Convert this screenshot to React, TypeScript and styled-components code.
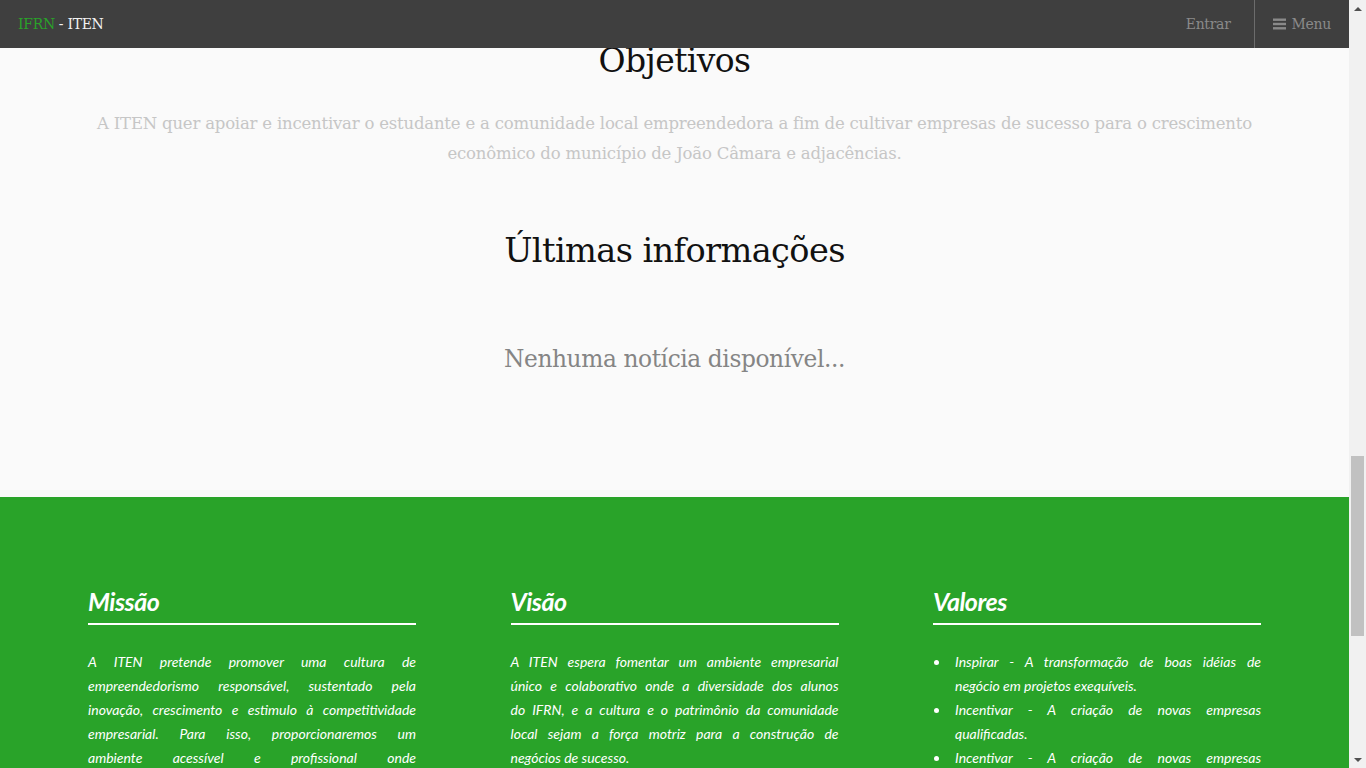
import React from "react";
import styled, { createGlobalStyle } from "styled-components";

const Global = createGlobalStyle`
  html, body { overflow: hidden; }
  body {
    margin: 0;
    background: #fafafa;
    font-family: "DejaVu Serif", "Liberation Serif", serif;
  }
`;

const Frame = styled.div`
  display: flex;
  height: 100vh;
  overflow: hidden;
`;

const Viewport = styled.div`
  flex: 1;
  position: relative;
  overflow: hidden;
`;

const ScrollTrack = styled.div`
  width: 17px;
  flex: none;
  background: #f1f1f1;
  display: flex;
  flex-direction: column;
  align-items: center;
`;

const Arrow = styled.div<{ $down?: boolean }>`
  height: 17px;
  width: 17px;
  display: flex;
  align-items: center;
  justify-content: center;
  margin-top: ${(p) => (p.$down ? "auto" : "0")};
  &::after {
    content: "";
    width: 0;
    height: 0;
    border-left: 4px solid transparent;
    border-right: 4px solid transparent;
    ${(p) =>
      p.$down ? "border-top: 4px solid #505050;" : "border-bottom: 4px solid #505050;"}
  }
`;

const Thumb = styled.div<{ $offset: number; $size: number }>`
  width: 13px;
  margin-top: ${(p) => p.$offset}px;
  height: ${(p) => p.$size}px;
  background: #c1c1c1;
`;

const NavBar = styled.header`
  position: absolute;
  top: 0;
  left: 0;
  right: 0;
  height: 48px;
  background: #3f3f3f;
  display: flex;
  align-items: stretch;
  justify-content: space-between;
  z-index: 10;
`;

const Brand = styled.a`
  display: flex;
  align-items: center;
  padding-left: 18px;
  font-family: "DejaVu Serif", serif;
  font-size: 14px;
  color: #f2f2f2;
  text-decoration: none;
  letter-spacing: -0.3px;
`;

const BrandAccent = styled.span`
  color: #2aa12a;
  margin-right: 4px;
`;

const NavRight = styled.nav`
  display: flex;
  align-items: stretch;
`;

const NavLink = styled.a<{ $divider?: boolean }>`
  display: flex;
  align-items: center;
  gap: 6px;
  padding: 0 ${(p) => (p.$divider ? "18px" : "23px")};
  font-family: "DejaVu Serif", serif;
  font-size: 14px;
  color: #8a8a8a;
  text-decoration: none;
  letter-spacing: -0.3px;
  border-left: ${(p) => (p.$divider ? "1px solid #6c6c6c" : "none")};
`;

const Main = styled.main`
  padding-top: 41px;
`;

const Section = styled.section`
  max-width: 1170px;
  margin: 0 auto;
  text-align: center;
`;

const Title = styled.h2<{ $top?: number; $size?: number }>`
  margin: ${(p) => p.$top ?? 0}px 0 0;
  font-family: "DejaVu Serif", serif;
  font-weight: 400;
  font-size: ${(p) => p.$size ?? 33}px;
  line-height: 40px;
  color: #111;
  letter-spacing: -0.6px;
`;

const Lead = styled.p`
  margin: 28px 0 0;
  font-family: "DejaVu Serif", serif;
  font-size: 16.5px;
  line-height: 30px;
  color: #c6c6c6;
  letter-spacing: -0.2px;
`;

const Empty = styled.p`
  margin: 73px 0 0;
  padding-bottom: 123px;
  font-family: "DejaVu Serif", serif;
  font-size: 23.3px;
  line-height: 30px;
  color: #858585;
  letter-spacing: -0.4px;
`;

const Green = styled.section`
  background: #29a329;
  padding: 87px 0 80px;
  color: #ffffff;
`;

const Columns = styled.div`
  width: 1173px;
  margin: 0 auto;
  display: grid;
  grid-template-columns: repeat(3, 328px);
  column-gap: 94.5px;
`;

const Column = styled.div``;

const ColTitle = styled.h3`
  margin: 0;
  padding-bottom: 5px;
  border-bottom: 2px solid #ffffff;
  font-family: "Lato", sans-serif;
  font-style: italic;
  font-weight: 700;
  font-size: 25px;
  line-height: 34px;
  letter-spacing: -0.5px;
`;

const textBase = `
  font-family: "Lato", sans-serif;
  font-style: italic;
  font-size: 14px;
  line-height: 24px;
  color: #ffffff;
`;

const ColText = styled.p`
  margin: 25px 0 0;
  ${textBase}
`;

const Line = styled.span<{ $last?: boolean }>`
  display: block;
  white-space: nowrap;
  text-align: justify;
  text-align-last: ${(p) => (p.$last ? "left" : "justify")};
`;

const List = styled.ul`
  margin: 25px 0 0;
  padding-left: 22px;
  list-style: none;
  ${textBase}
`;

const Item = styled.li`
  position: relative;
  &::before {
    content: "";
    position: absolute;
    left: -21px;
    top: 10px;
    width: 5px;
    height: 5px;
    border-radius: 50%;
    background: #ffffff;
  }
`;

const BarsIcon = () => (
  <svg width="13" height="12" viewBox="0 0 13 12" aria-hidden="true">
    <rect x="0" y="0.5" width="13" height="2.4" fill="#8a8a8a" />
    <rect x="0" y="4.8" width="13" height="2.4" fill="#8a8a8a" />
    <rect x="0" y="9.1" width="13" height="2.4" fill="#8a8a8a" />
  </svg>
);

const Justified = ({ lines }: { lines: string[] }) => (
  <>
    {lines.map((l, i) => (
      <Line key={i} $last={i === lines.length - 1}>
        {l}
      </Line>
    ))}
  </>
);

const missao = [
  "A ITEN pretende promover uma cultura de",
  "empreendedorismo responsável, sustentado pela",
  "inovação, crescimento e estimulo à competitividade",
  "empresarial. Para isso, proporcionaremos um",
  "ambiente acessível e profissional onde",
  "empreendedores possam desenvolver suas ideias",
  "e transformá-las em negócios de sucesso.",
];

const visao = [
  "A ITEN espera fomentar um ambiente empresarial",
  "único e colaborativo onde a diversidade dos alunos",
  "do IFRN, e a cultura e o patrimônio da comunidade",
  "local sejam a força motriz para a construção de",
  "negócios de sucesso.",
];

const valores = [
  ["Inspirar - A transformação de boas idéias de", "negócio em projetos exequíveis."],
  ["Incentivar - A criação de novas empresas", "qualificadas."],
  ["Incentivar - A criação de novas empresas", "sólidas e inovadoras."],
];

export default function App() {
  return (
    <Frame>
      <Global />
      <Viewport>
        <NavBar>
          <Brand href="#">
            <BrandAccent>IFRN</BrandAccent>- ITEN
          </Brand>
          <NavRight>
            <NavLink href="#">Entrar</NavLink>
            <NavLink href="#" $divider>
              <BarsIcon />
              Menu
            </NavLink>
          </NavRight>
        </NavBar>
        <Main>
          <Section>
            <Title>Objetivos</Title>
            <Lead>
              A ITEN quer apoiar e incentivar o estudante e a comunidade local empreendedora a fim de cultivar
              empresas de sucesso para o crescimento econômico do município de João Câmara e adjacências.
            </Lead>
            <Title $top={62} $size={33.6}>Últimas informações</Title>
            <Empty>Nenhuma notícia disponível...</Empty>
          </Section>
          <Green>
            <Columns>
              <Column>
                <ColTitle>Missão</ColTitle>
                <ColText>
                  <Justified lines={missao} />
                </ColText>
              </Column>
              <Column>
                <ColTitle>Visão</ColTitle>
                <ColText>
                  <Justified lines={visao} />
                </ColText>
              </Column>
              <Column>
                <ColTitle>Valores</ColTitle>
                <List>
                  {valores.map((v, i) => (
                    <Item key={i}>
                      <Justified lines={v} />
                    </Item>
                  ))}
                </List>
              </Column>
            </Columns>
          </Green>
        </Main>
      </Viewport>
      <ScrollTrack>
        <Arrow />
        <Thumb $offset={439} $size={180} />
        <Arrow $down />
      </ScrollTrack>
    </Frame>
  );
}
